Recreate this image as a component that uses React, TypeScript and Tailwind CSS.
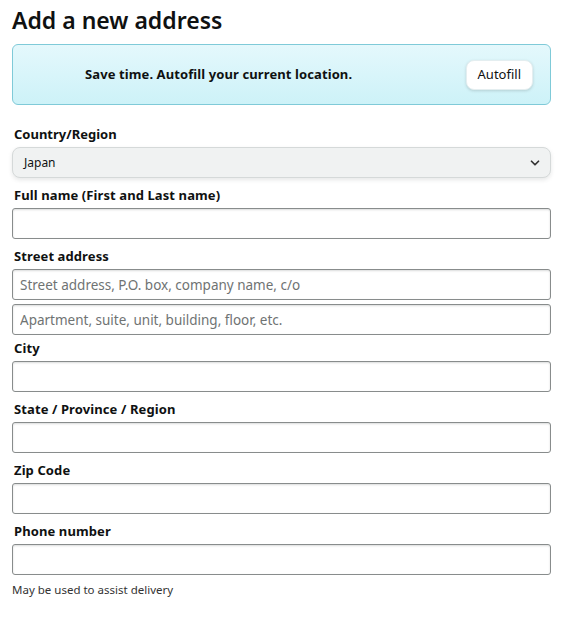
import { ChevronDown } from 'lucide-react';

const fields = [
    { label: 'Full name (First and Last name)', inputs: [''], mt: 'mt-[8px]' },
    {
        label: 'Street address',
        inputs: ['Street address, P.O. box, company name, c/o', 'Apartment, suite, unit, building, floor, etc.'],
        mt: 'mt-[8px]'
    },
    { label: 'City', inputs: [''], mt: 'mt-[4px]' },
    { label: 'State / Province / Region', inputs: [''], mt: 'mt-[8px]' },
    { label: 'Zip Code', inputs: [''], mt: 'mt-[8px]' },
    { label: 'Phone number', inputs: [''], mt: 'mt-[8px]' }
];

const App = () => {
    return (
        <div className="min-h-screen bg-white text-[#0f1111] font-['Noto_Sans',sans-serif]">
            <div className="w-[539px] ml-[12px] pt-[4px]">
                <h1 className="text-[23px] leading-[32px] font-semibold">Add a new address</h1>

                {/* Autofill banner */}
                <div className="mt-[8px] h-[61px] rounded-[6px] border border-[#7fcad8] bg-gradient-to-b from-[#e4f8fc] to-[#cdf2f8] flex items-center justify-between pl-[72px] pr-[17px]">
                    <p className="text-[13px] font-bold tracking-[0.1px]">Save time. Autofill your current location.</p>
                    <button className="h-[30px] px-[11px] rounded-[8px] bg-white text-[13px] shadow-[0_1px_3px_rgba(0,0,0,0.15)] border border-[#e4eef0]">
                        Autofill
                    </button>
                </div>

                <div className="mt-[20px]">
                    <label className="block pl-[2px] text-[13px] leading-[19px] font-bold">Country/Region</label>
                    <div className="mt-[3px] h-[31px] rounded-[8px] border border-[#d5d9d9] bg-[#f0f2f2] shadow-[0_2px_4px_rgba(213,217,217,0.6)] flex items-center justify-between pl-[11px] pr-[8px]">
                        <span className="text-[12px]">Japan</span>
                        <ChevronDown size={14} strokeWidth={3} className="text-[#333]" />
                    </div>
                </div>

                {fields.map((f) => (
                    <div key={f.label} className={f.mt}>
                        <label className="block pl-[2px] text-[13px] leading-[19px] font-bold tracking-[0.1px]">{f.label}</label>
                        <div className="mt-[3px] flex flex-col gap-[4px]">
                            {f.inputs.map((ph, i) => (
                                <input
                                    key={i}
                                    placeholder={ph}
                                    className="h-[31px] w-full rounded-[3px] border border-[#888c8c] shadow-[inset_0_1px_2px_rgba(15,17,17,0.15)] px-[7px] text-[13.5px] placeholder:text-[#6f7373] outline-none"
                                />
                            ))}
                        </div>
                    </div>
                ))}

                <p className="mt-[7px] text-[11.5px] leading-[16px] text-[#333]">May be used to assist delivery</p>
            </div>
        </div>
    );
};

export default App;
